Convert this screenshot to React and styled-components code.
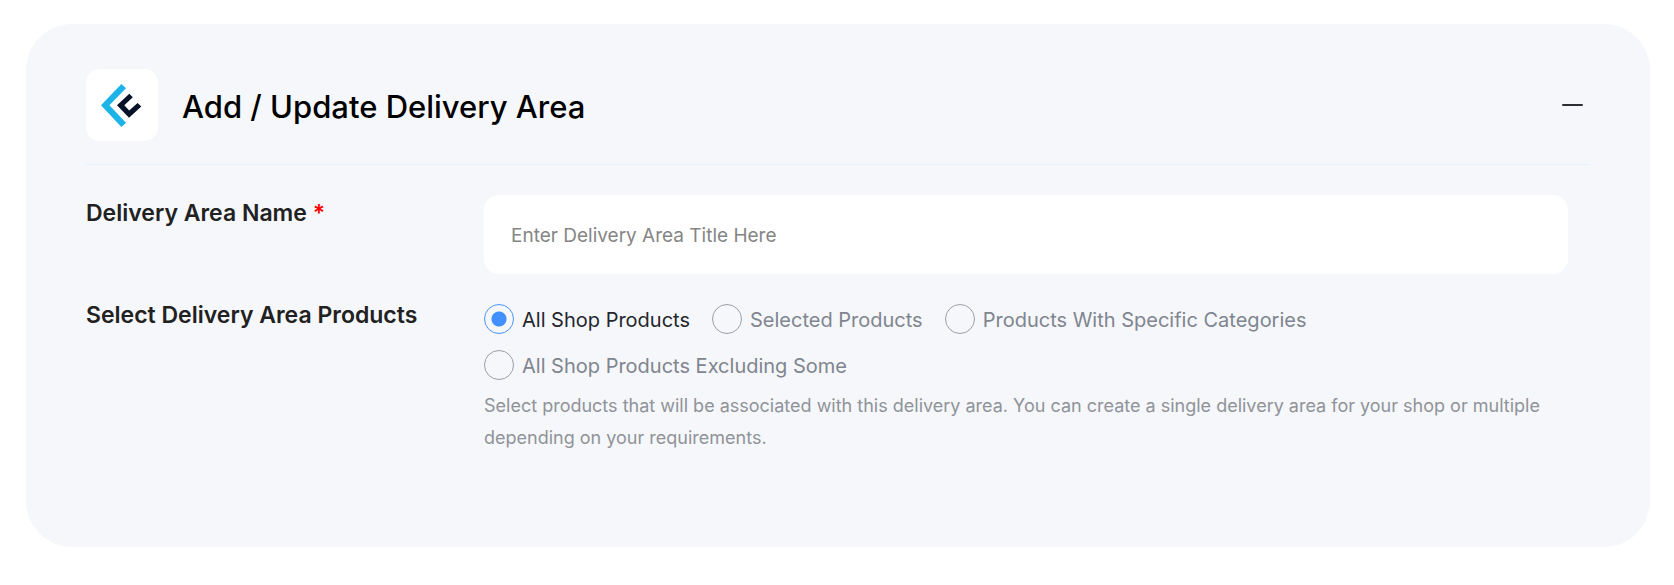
import React, { useState } from "react";
import styled, { createGlobalStyle } from "styled-components";

const GlobalStyle = createGlobalStyle`
  *, *::before, *::after { box-sizing: border-box; }
  body {
    margin: 0;
    background: #fff;
    color: #212121;
    font-family: Inter, "Liberation Sans", sans-serif;
  }
`;

const Page = styled.main`
  padding: 24px 24px 38px 26px;
`;

const Card = styled.section`
  padding: 45px 60px 93px;
  border-radius: 46px;
  background: #f5f7fb;
`;

const Header = styled.header`
  display: flex;
  align-items: center;
  gap: 24px;
  padding-bottom: 23px;
  border-bottom: 1px solid #e9f0fd;
`;

const LogoTile = styled.div`
  display: flex;
  flex: none;
  width: 72px;
  height: 72px;
  border-radius: 14px;
  background: #fff;
`;

const Title = styled.h1`
  flex: 1;
  margin: 0;
  padding-top: 3px;
  color: #000;
  font-size: 31px;
  font-weight: 500;
  line-height: 40px;
`;

const CollapseButton = styled.button`
  display: flex;
  padding: 7px;
  border: 0;
  background: none;
  color: #2b2e33;
  cursor: pointer;
`;

const Form = styled.form`
  display: grid;
  gap: 30px;
  padding: 30px 22px 0 0;
`;

const Row = styled.div`
  display: grid;
  grid-template-columns: 374px minmax(0, 1fr);
  column-gap: 24px;
  align-items: start;
`;

const FieldName = styled.div`
  padding-top: ${(p) => (p.$tall ? "2px" : "0")};
  font-size: 23px;
  font-weight: 600;
  line-height: ${(p) => (p.$tall ? "32px" : "22px")};
`;

const Required = styled.span`
  color: #f00;
`;

const TextInput = styled.input`
  width: 100%;
  height: 79px;
  padding: 2px 27px 0;
  border: 0;
  border-radius: 15px;
  background: #fff;
  color: #212121;
  font: 400 19px/30px Inter, "Liberation Sans", sans-serif;
  &::placeholder { color: #858585; opacity: 1; }
`;

const Options = styled.div`
  display: flex;
  flex-wrap: wrap;
  gap: 16px 22px;
`;

const Option = styled.label`
  display: flex;
  align-items: center;
  gap: 8px;
  color: ${(p) => (p.$checked ? "#24272d" : "#80858f")};
  font-size: 20px;
  line-height: 30px;
  white-space: nowrap;
  cursor: pointer;
`;

const OptionText = styled.span`
  padding-top: 2px;
  line-height: 28px;
`;

const Radio = styled.input`
  appearance: none;
  flex: none;
  width: 30px;
  height: 30px;
  margin: 0;
  border: 1px solid #9b9fa5;
  border-radius: 50%;
  &:checked {
    border-color: #4a94ff;
    background: radial-gradient(circle, #4290ff 7px, transparent 8px);
  }
`;

const Help = styled.p`
  margin: 10px 0 0;
  color: #909398;
  font-size: 18px;
  line-height: 32px;
`;

const OPTIONS = [
  "All Shop Products",
  "Selected Products",
  "Products With Specific Categories",
  "All Shop Products Excluding Some",
];

const Logo = () => (
  <svg width="72" height="72" viewBox="0 0 72 72" aria-hidden="true">
    <path d="M35.4 15 L40 19.3 L23.4 36.3 L40 53.7 L35.4 58 L15 36.3 Z" fill="#1cb4e8" />
    <path
      d="M43.3 24.7 L46.8 28.2 L38.3 36.3 L43.2 41.6 L51.6 33.9 L55.3 37.6 L43 48.7 L31 36.3 Z"
      fill="#061228"
    />
  </svg>
);

export default function App() {
  const [selected, setSelected] = useState(OPTIONS[0]);
  const [open, setOpen] = useState(true);

  return (
    <Page>
      <GlobalStyle />
      <Card>
        <Header>
          <LogoTile><Logo /></LogoTile>
          <Title>Add / Update Delivery Area</Title>
          <CollapseButton type="button" aria-label="Collapse" aria-expanded={open} onClick={() => setOpen(!open)}>
            <svg width="21" height="2" viewBox="0 0 21 2" aria-hidden="true">
              <rect width="21" height="2" rx="1" fill="currentColor" />
            </svg>
          </CollapseButton>
        </Header>
        {open && (
          <Form>
            <Row>
              <FieldName as="label" $tall htmlFor="area-name">
                Delivery Area Name <Required>*</Required>
              </FieldName>
              <TextInput id="area-name" type="text" placeholder="Enter Delivery Area Title Here" />
            </Row>
            <Row role="radiogroup" aria-labelledby="area-products">
              <FieldName id="area-products">Select Delivery Area Products</FieldName>
              <div>
                <Options>
                  {OPTIONS.map((name) => (
                    <Option key={name} $checked={selected === name}>
                      <Radio
                        type="radio"
                        name="products"
                        checked={selected === name}
                        onChange={() => setSelected(name)}
                      />
                      <OptionText>{name}</OptionText>
                    </Option>
                  ))}
                </Options>
                <Help>
                  Select products that will be associated with this delivery area. You can create a single delivery
                  area for your shop or multiple depending on your requirements.
                </Help>
              </div>
            </Row>
          </Form>
        )}
      </Card>
    </Page>
  );
}
